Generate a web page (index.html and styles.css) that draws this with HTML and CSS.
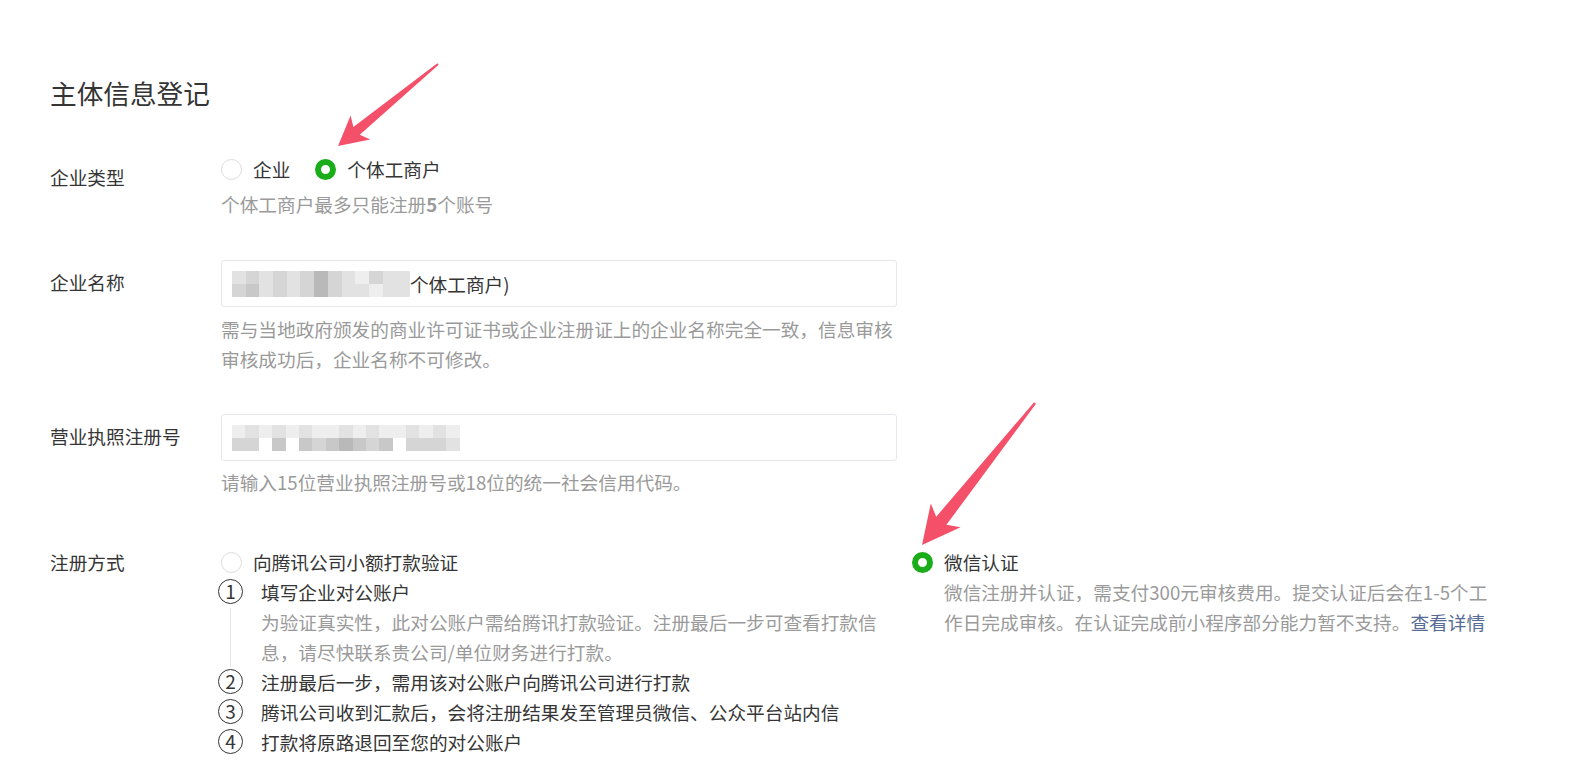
FILE: index.html
```html
<!DOCTYPE html>
<html lang="zh-CN">
<head>
    <meta charset="UTF-8">
    <title>主体信息登记</title>
    <link rel="stylesheet" href="styles.css">
</head>
<body>
    <div class="page">
        <h2 class="page-title">主体信息登记</h2>

        <div class="form-row row-type">
            <label class="form-label">企业类型</label>
            <div class="form-control">
                <div class="radio-group">
                    <span class="radio-option"><i class="radio"></i>企业</span>
                    <span class="radio-option"><i class="radio checked"></i>个体工商户</span>
                </div>
                <p class="form-tips tips-type">个体工商户最多只能注册<b>5</b>个账号</p>
            </div>
        </div>

        <div class="form-row row-name">
            <label class="form-label">企业名称</label>
            <div class="form-control">
                <div class="input-box">
                    <span class="mosaic mosaic-name">
                        <i class="s2"></i><i class="s3"></i><i class="s2"></i><i class="s3"></i><i class="s2"></i><i class="s3"></i><i class="s5"></i><i class="s3"></i><i class="s2"></i><i class="s1"></i><i class="s3"></i><i class="s2"></i><i class="s2"></i>
                        <i class="s3"></i><i class="s4"></i><i class="s2"></i><i class="s3"></i><i class="s2"></i><i class="s3"></i><i class="s5"></i><i class="s3"></i><i class="s2"></i><i class="s2"></i><i class="s1"></i><i class="s2"></i><i class="s2"></i>
                    </span>
                    <span class="input-text">个体工商户)</span>
                </div>
                <p class="form-tips tips-input">需与当地政府颁发的商业许可证书或企业注册证上的企业名称完全一致，信息审核审核成功后，企业名称不可修改。</p>
            </div>
        </div>

        <div class="form-row row-license">
            <label class="form-label">营业执照注册号</label>
            <div class="form-control">
                <div class="input-box">
                    <span class="mosaic mosaic-license">
                        <i class="s1"></i><i class="s2"></i><i class="s1"></i><i class="s2"></i><i class="s1"></i><i class="s2"></i><i class="s1"></i><i class="s1"></i><i class="s2"></i><i class="s1"></i><i class="s2"></i><i class="s1"></i><i class="s1"></i><i class="s2"></i><i class="s1"></i><i class="s2"></i><i class="s1"></i>
                        <i class="s3"></i><i class="s3"></i><i class="s0"></i><i class="s4"></i><i class="s0"></i><i class="s4"></i><i class="s3"></i><i class="s4"></i><i class="s5"></i><i class="s4"></i><i class="s3"></i><i class="s4"></i><i class="s0"></i><i class="s3"></i><i class="s3"></i><i class="s3"></i><i class="s2"></i>
                    </span>
                </div>
                <p class="form-tips tips-input tips-license">请输入15位营业执照注册号或18位的统一社会信用代码。</p>
            </div>
        </div>

        <div class="form-row row-method">
            <label class="form-label">注册方式</label>
            <div class="form-control method">
                <div class="method-left">
                    <div class="radio-group">
                        <span class="radio-option"><i class="radio"></i>向腾讯公司小额打款验证</span>
                    </div>
                    <div class="steps">
                        <div class="step">
                            <div class="step-index">
                                <span class="step-num">1</span>
                                <span class="step-line"></span>
                            </div>
                            <div class="step-body">
                                <p class="step-title">填写企业对公账户</p>
                                <p class="step-desc">为验证真实性，此对公账户需给腾讯打款验证。注册最后一步可查看打款信息，请尽快联系贵公司/单位财务进行打款。</p>
                            </div>
                        </div>
                        <div class="step">
                            <div class="step-index"><span class="step-num">2</span></div>
                            <div class="step-body"><p class="step-title">注册最后一步，需用该对公账户向腾讯公司进行打款</p></div>
                        </div>
                        <div class="step">
                            <div class="step-index"><span class="step-num">3</span></div>
                            <div class="step-body"><p class="step-title">腾讯公司收到汇款后，会将注册结果发至管理员微信、公众平台站内信</p></div>
                        </div>
                        <div class="step">
                            <div class="step-index"><span class="step-num">4</span></div>
                            <div class="step-body"><p class="step-title">打款将原路退回至您的对公账户</p></div>
                        </div>
                    </div>
                </div>
                <div class="method-right">
                    <div class="radio-group">
                        <span class="radio-option"><i class="radio checked"></i>微信认证</span>
                    </div>
                    <p class="method-desc">微信注册并认证，需支付300元审核费用。提交认证后会在1-5个工作日完成审核。在认证完成前小程序部分能力暂不支持。<a class="link" href="#">查看详情</a></p>
                </div>
            </div>
        </div>
    </div>

    <!-- 标注箭头 -->
    <svg class="annotations" width="1588" height="780" viewBox="0 0 1588 780">
        <g transform="translate(438 64) rotate(140.65)">
            <polygon points="0,-1 105.3,-5 100.3,-15.5 129.3,0 100.3,15.5 105.3,5 0,1"/>
        </g>
        <g transform="translate(1035 403) rotate(128.5)">
            <polygon points="0,-1.2 150.5,-6.5 143.5,-19 181.5,0 143.5,19 150.5,6.5 0,1.2"/>
        </g>
    </svg>
</body>
</html>
```

FILE: styles.css
```css
* {
    margin: 0;
    padding: 0;
    box-sizing: border-box;
}

body {
    position: relative;
    background: #fff;
    color: #353535;
    font-family: "Noto Sans CJK SC", "Noto Sans", sans-serif;
    font-size: 18.67px;
    line-height: 30px;
    overflow: hidden;
}

.page {
    height: 780px;
    padding: 73px 0 0 50px;
}

.page-title {
    font-size: 26.67px;
    font-weight: normal;
    line-height: 40px;
}

.form-row {
    display: flex;
}

.form-label {
    width: 171px;
    flex-shrink: 0;
    padding-top: 7px;
}

.row-type {
    margin-top: 41px;
}

.row-type .form-label {
    padding-top: 8px;
}

.row-name {
    margin-top: 41px;
}

.row-license {
    margin-top: 40px;
}

.row-method {
    margin-top: 50px;
}

.row-method .form-label {
    padding-top: 0;
}

/* 单选框 */
.radio-group {
    display: flex;
    align-items: center;
    height: 30px;
}

.radio-option {
    display: inline-flex;
    align-items: center;
    margin-right: 25px;
}

.radio {
    width: 21px;
    height: 21px;
    border-radius: 50%;
    border: 1.5px solid #dcdcdc;
    margin-right: 11px;
}

.radio.checked {
    border: 6px solid #1aad19;
}

.form-tips {
    width: 680px;
    color: #9a9a9a;
}

.form-tips b {
    font-weight: bold;
}

.tips-type {
    margin-top: 5px;
}

.tips-input {
    margin-top: 7px;
}

.tips-license {
    margin-top: 6px;
}

/* 输入框 */
.input-box {
    display: flex;
    align-items: center;
    width: 676px;
    height: 47px;
    padding-left: 10px;
    border: 1px solid #e7e7eb;
    border-radius: 3px;
}

.mosaic {
    display: inline-grid;
    grid-auto-rows: 13px;
}

.mosaic-name {
    grid-template-columns: repeat(13, 13.7px);
}

.mosaic-license {
    grid-template-columns: repeat(17, 13.4px);
}

.mosaic .s0 { background: #fff; }
.mosaic .s1 { background: #eeeeee; }
.mosaic .s2 { background: #e2e2e2; }
.mosaic .s3 { background: #d5d5d5; }
.mosaic .s4 { background: #c8c8c8; }
.mosaic .s5 { background: #b9b9b9; }

.input-text {
    color: #353535;
}

/* 注册方式 */
.method {
    display: flex;
}

.method-left {
    width: 691px;
    flex-shrink: 0;
}

.steps {
    margin-left: -3px;
}

.step {
    display: flex;
}

.step-index {
    display: flex;
    flex-direction: column;
    align-items: center;
    width: 25px;
    margin-right: 18px;
}

.step-num {
    width: 25px;
    height: 25px;
    margin-top: 2px;
    border: 1.5px solid #353535;
    border-radius: 50%;
    font-size: 19px;
    line-height: 22px;
    text-align: center;
}

.step-line {
    flex: 1;
    width: 1px;
    margin-top: 4px;
    background: #e3e3e3;
}

.step-body {
    width: 625px;
}

.step-desc {
    color: #9a9a9a;
}

.method-desc {
    width: 560px;
    margin-left: 32px;
    color: #9a9a9a;
}

.link {
    color: #576b95;
    text-decoration: none;
}

.annotations {
    position: absolute;
    top: 0;
    left: 0;
    pointer-events: none;
}

.annotations polygon {
    fill: #f5506a;
}
```
